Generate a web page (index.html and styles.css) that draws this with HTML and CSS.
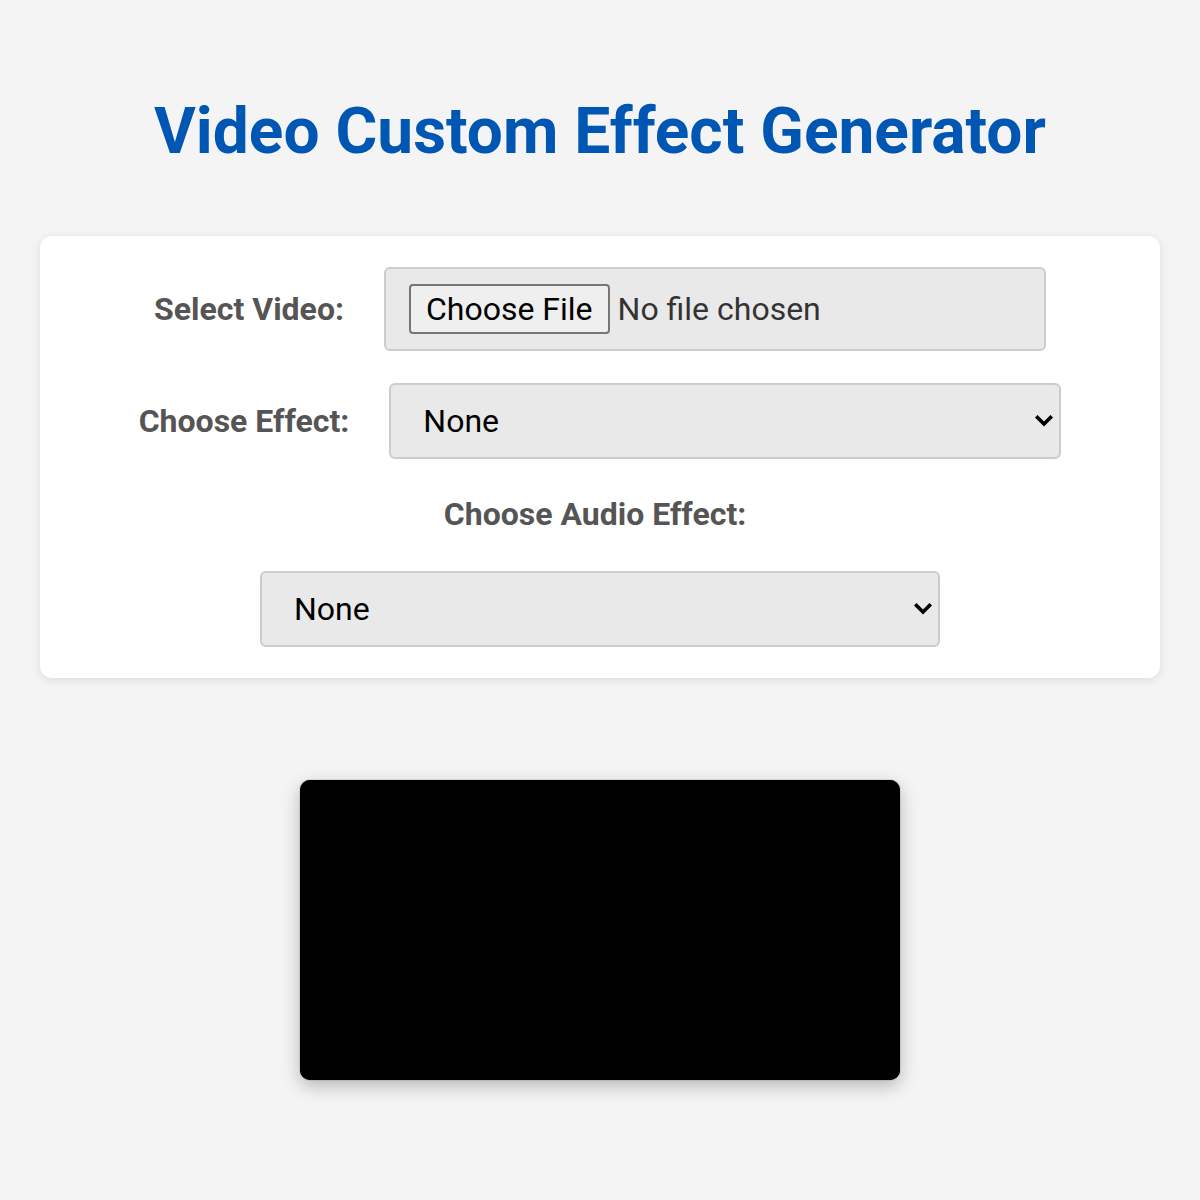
FILE: index.html
```html
<!DOCTYPE html>
<html lang="en">
<head>
<meta charset="utf-8">
<title>Video Custom Effect Generator</title>
<link rel="stylesheet" href="styles.css">
</head>
<body>
<div class="page">
  <h1 class="title">Video Custom Effect Generator</h1>
  <div class="card">
    <div class="row">
      <label class="label" for="video">Select Video:</label>
      <input class="file" type="file" id="video" accept="video/*">
    </div>
    <div class="row">
      <label class="label" for="effect">Choose Effect:</label>
      <div class="select-wrap">
        <select class="select select-effect" id="effect">
          <option>None</option>
          <option>Grayscale</option>
          <option>Sepia</option>
          <option>Invert</option>
        </select>
        <svg class="chevron" viewBox="0 0 18 12" aria-hidden="true"><path d="M2.5 2.5 L9 9 L15.5 2.5" fill="none" stroke="#000" stroke-width="3.6" stroke-linecap="square" stroke-linejoin="miter"/></svg>
      </div>
    </div>
    <div class="stack">
      <label class="label label-audio" for="audio">Choose Audio Effect:</label>
      <div class="select-wrap">
        <select class="select select-audio" id="audio">
          <option>None</option>
          <option>Echo</option>
          <option>Reverb</option>
        </select>
        <svg class="chevron" viewBox="0 0 18 12" aria-hidden="true"><path d="M2.5 2.5 L9 9 L15.5 2.5" fill="none" stroke="#000" stroke-width="3.6" stroke-linecap="square" stroke-linejoin="miter"/></svg>
      </div>
    </div>
  </div>
  <div class="preview">
    <div class="screen">
      <video class="video" width="600" height="300"></video>
    </div>
  </div>
</div>
</body>
</html>
```

FILE: styles.css
```css
html, body {
  margin: 0;
  padding: 0;
}

html {
  background: #f4f4f4;
}

body {
  background: #f4f4f4;
  font-family: Roboto, "Liberation Sans", sans-serif;
  color: #333;
}

.page {
  padding: 94px 40px 80px;
}

.title {
  margin: 0;
  font-size: 64px;
  line-height: 75px;
  font-weight: 700;
  color: #0056b3;
  text-align: center;
}

.card {
  margin-top: 67px;
  background: #fff;
  border-radius: 12px;
  box-shadow: 0 2px 10px rgba(0, 0, 0, 0.1);
  padding: 31px 0;
  display: flex;
  flex-direction: column;
  align-items: center;
}

.row {
  display: flex;
  align-items: center;
  justify-content: center;
  gap: 40px;
}

.row + .row {
  margin-top: 32px;
}

.label {
  font-size: 32px;
  font-weight: 700;
  color: #555;
}

.stack {
  display: flex;
  flex-direction: column;
  align-items: center;
  margin-top: 37px;
}

.label-audio {
  line-height: 37px;
  margin-bottom: 38px;
  margin-right: 10px;
}

.file {
  box-sizing: border-box;
  width: 662px;
  height: 84px;
  padding: 15px 23px;
  font-family: Roboto, "Liberation Sans", sans-serif;
  font-size: 32px;
  color: #333;
  background: #e9e9e9;
  border: 2px solid #ccc;
  border-radius: 6px;
}

.file::file-selector-button {
  font: inherit;
  color: #000;
  padding: 4px 15px;
  margin-right: 8px;
  background: #efefef;
  border: 2px solid #767676;
  border-radius: 4px;
}

.select-wrap {
  position: relative;
  display: flex;
}

.select {
  box-sizing: border-box;
  height: 76px;
  padding: 0 40px 0 32px;
  font-family: Roboto, "Liberation Sans", sans-serif;
  font-size: 32px;
  color: #000;
  background: #e9e9e9;
  border: 2px solid #ccc;
  border-radius: 6px;
  appearance: none;
  -webkit-appearance: none;
}

.chevron {
  position: absolute;
  right: 8px;
  top: 50%;
  width: 18px;
  height: 12px;
  margin-top: -6px;
  pointer-events: none;
}

.select-effect {
  width: 672px;
}

.select-audio {
  width: 680px;
}

.preview {
  display: flex;
  justify-content: center;
  margin-top: 102px;
}

.screen {
  width: 600px;
  height: 300px;
  border-radius: 10px;
  overflow: hidden;
  background: #000;
  box-shadow: 0 0 0 1px rgba(0, 0, 0, 0.08), 0 6px 18px rgba(0, 0, 0, 0.25);
}

.video {
  display: block;
  width: 600px;
  height: 300px;
  background: #000;
}
```
